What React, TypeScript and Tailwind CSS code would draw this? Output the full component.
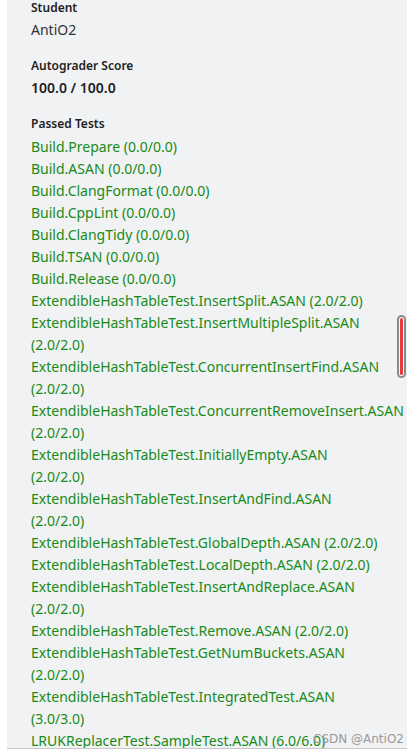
import React from "react";

const tests = [
  "Build.Prepare (0.0/0.0)",
  "Build.ASAN (0.0/0.0)",
  "Build.ClangFormat (0.0/0.0)",
  "Build.CppLint (0.0/0.0)",
  "Build.ClangTidy (0.0/0.0)",
  "Build.TSAN (0.0/0.0)",
  "Build.Release (0.0/0.0)",
  "ExtendibleHashTableTest.InsertSplit.ASAN (2.0/2.0)",
  "ExtendibleHashTableTest.InsertMultipleSplit.ASAN (2.0/2.0)",
  "ExtendibleHashTableTest.ConcurrentInsertFind.ASAN (2.0/2.0)",
  "ExtendibleHashTableTest.ConcurrentRemoveInsert.ASAN (2.0/2.0)",
  "ExtendibleHashTableTest.InitiallyEmpty.ASAN (2.0/2.0)",
  "ExtendibleHashTableTest.InsertAndFind.ASAN (2.0/2.0)",
  "ExtendibleHashTableTest.GlobalDepth.ASAN (2.0/2.0)",
  "ExtendibleHashTableTest.LocalDepth.ASAN (2.0/2.0)",
  "ExtendibleHashTableTest.InsertAndReplace.ASAN (2.0/2.0)",
  "ExtendibleHashTableTest.Remove.ASAN (2.0/2.0)",
  "ExtendibleHashTableTest.GetNumBuckets.ASAN (2.0/2.0)",
  "ExtendibleHashTableTest.IntegratedTest.ASAN (3.0/3.0)",
  "LRUKReplacerTest.SampleTest.ASAN (6.0/6.0)",
];

export default function App() {
  return (
    <div
      className="relative h-[752px] w-[407px] overflow-hidden bg-white"
      style={{ fontFamily: '"Noto Sans", "Open Sans", sans-serif' }}
    >
      <div className="h-[749px] ml-[7px] bg-[#f1f2f4] pl-6 pr-[25px] overflow-hidden border-b border-[#c8c8c8]">
        <div className="text-[12px] font-semibold text-[#222] leading-[16px]">Student</div>
        <div className="text-[14px] text-[#333] leading-[22px] mt-[3px]">AntiO2</div>
        <div className="text-[12px] font-semibold text-[#222] leading-[16px] mt-[17px]">Autograder Score</div>
        <div className="text-[14px] font-semibold text-[#222] leading-[22px] mt-[3px]">100.0 / 100.0</div>
        <div className="text-[12px] font-semibold text-[#222] leading-[16px] mt-[17px]">Passed Tests</div>
        <div className="mt-[4px] text-[14px] leading-[22px] text-[#188a18]">
          {tests.map((t) => (
            <div key={t}>{t}</div>
          ))}
        </div>
      </div>
      <div className="absolute left-[397px] top-[315px] h-[63px] w-[9px] rounded-full border-2 border-[#8a8a8a] bg-white p-[1px]">
        <div className="h-full w-full rounded-full bg-[#e83a3a]" />
      </div>
      <div className="absolute left-[313px] top-[731px] text-[12px] text-[#9a9a9a] leading-[16px]" style={{ fontFamily: '"DejaVu Sans", sans-serif' }}>
        CSDN @AntiO2
      </div>
    </div>
  );
}
